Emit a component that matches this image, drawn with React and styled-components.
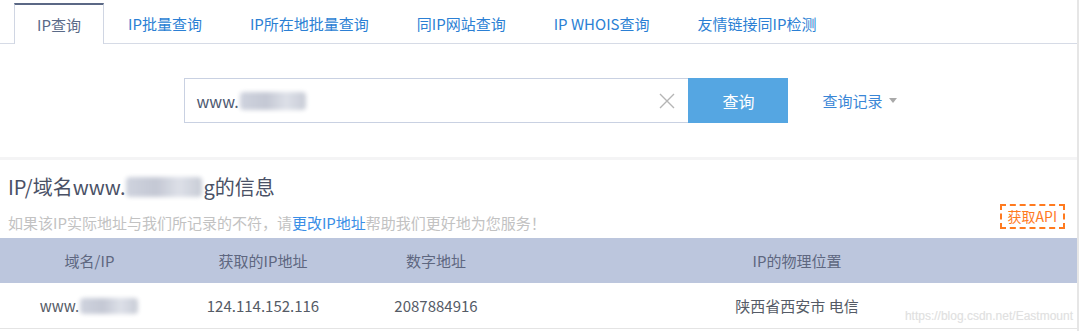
import React from 'react'
import styled, { createGlobalStyle } from 'styled-components'

const GlobalStyle = createGlobalStyle`
  body {
    margin: 0;
    background: #fff;
    font-family: "Noto Sans CJK SC", "Noto Sans", "Liberation Sans", sans-serif;
  }
`

const tabs = ['IP查询', 'IP批量查询', 'IP所在地批量查询', '同IP网站查询', 'IP WHOIS查询', '友情链接同IP检测']

const getColumns = () => [
  { title: '域名/IP', value: <>www.<Blur $w={58} $h={16} /></> },
  { title: '获取的IP地址', value: '124.114.152.116' },
  { title: '数字地址', value: '2087884916' },
  { title: 'IP的物理位置', value: '陕西省西安市 电信' },
]

export default function App() {
  const columns = getColumns()

  return (
    <>
      <GlobalStyle />
      <Page>
        <TabBar>
          {tabs.map((t, i) => (
            <Tab key={t} $active={i === 0}>{t}</Tab>
          ))}
        </TabBar>

        {/* search */}
        <SearchArea>
          <SearchBox>
            <InputText>www.<Blur $w={66} $h={18} /></InputText>
            <ClearIcon width="16" height="16" viewBox="0 0 16 16">
              <path d="M1 1 L15 15 M15 1 L1 15" stroke="#b5b5b5" strokeWidth="1.4" fill="none" />
            </ClearIcon>
          </SearchBox>
          <SearchButton>查询</SearchButton>
          <History>
            查询记录
            <Caret />
          </History>
        </SearchArea>

        <Divider />

        {/* info */}
        <Info>
          <Heading>
            IP/域名www.<Blur $w={76} $h={20} />g的信息
          </Heading>
          <NoteRow>
            <Note>
              如果该IP实际地址与我们所记录的不符，请<NoteLink>更改IP地址</NoteLink>帮助我们更好地为您服务！
            </Note>
            <ApiButton>获取API</ApiButton>
          </NoteRow>
        </Info>

        <Table>
          <HeadRow>
            {columns.map(c => <Cell key={c.title}>{c.title}</Cell>)}
          </HeadRow>
          <BodyRow>
            {columns.map(c => <Cell key={c.title}>{c.value}</Cell>)}
            <Watermark>https://blog.csdn.net/Eastmount</Watermark>
          </BodyRow>
        </Table>
      </Page>
    </>
  )
}

const Page = styled.div`
  width: 1077px;
  height: 331px;
  border-right: 2px solid #e6e6e6;
  overflow: hidden;
`

const TabBar = styled.div`
  display: flex;
  align-items: flex-end;
  height: 43px;
  padding-left: 14px;
  border-bottom: 1px solid #d6dbe6;
`

const Tab = styled.div`
  height: 40px;
  box-sizing: border-box;
  padding: 0 24px;
  display: flex;
  align-items: center;
  font-size: 15px;
  color: #2b7fd4;
  white-space: nowrap;

  ${props =>
    props.$active &&
    `
    width: 90px;
    justify-content: center;
    padding: 0;
    color: #5a6a88;
    background: #fff;
    border-top: 2px solid #5b6885;
    border-left: 1px solid #d0d6e3;
    border-right: 1px solid #d0d6e3;
    margin-bottom: -1px;
    height: 41px;
  `};
`

const SearchArea = styled.div`
  height: 113px;
  display: flex;
  align-items: center;
  justify-content: center;
  padding-left: 4px;
`

const SearchBox = styled.div`
  width: 504px;
  height: 45px;
  box-sizing: border-box;
  border: 1px solid #c9d1e2;
  border-right: none;
  display: flex;
  align-items: center;
  padding: 0 12px 0 11px;
`

const InputText = styled.div`
  flex: 1;
  font-size: 16px;
  color: #4d5870;
  display: flex;
  align-items: center;
`

const Blur = styled.span`
  display: inline-block;
  width: ${p => p.$w}px;
  height: ${p => p.$h}px;
  margin: 0 1px;
  background: linear-gradient(90deg, #cfd3de 0%, #c4c8d4 40%, #dde0e8 70%, #c8ccd6 100%);
  filter: blur(2px);
  border-radius: 4px;
  vertical-align: middle;
`

const ClearIcon = styled.svg`
  margin-right: 1px;
`

const SearchButton = styled.button`
  width: 100px;
  height: 45px;
  border: none;
  background: #55a6e2;
  color: #fff;
  font-size: 16px;
  font-family: inherit;
  padding: 0;
`

const History = styled.div`
  margin-left: 34px;
  font-size: 15px;
  color: #3a86d6;
  display: flex;
  align-items: center;
`

const Caret = styled.span`
  margin-left: 6px;
  width: 0;
  height: 0;
  border-left: 4px solid transparent;
  border-right: 4px solid transparent;
  border-top: 5px solid #a9a9a9;
`

const Divider = styled.div`
  height: 3px;
  background: #f4f4f5;
`

const Info = styled.div`
  padding: 12px 12px 0 8px;
  height: 66px;
`

const Heading = styled.div`
  font-size: 20px;
  color: #4a5166;
  line-height: 30px;
  display: flex;
  align-items: center;
`

const NoteRow = styled.div`
  display: flex;
  align-items: center;
  justify-content: space-between;
  margin-top: 4px;
`

const Note = styled.div`
  font-size: 15px;
  color: #c2c2c2;
  padding-top: 6px;
`

const NoteLink = styled.span`
  color: #3a8ee6;
`

const ApiButton = styled.div`
  border: 2px dashed #ff7a1f;
  color: #ff7a1f;
  font-size: 14px;
  padding: 0 6px;
  height: 21px;
  line-height: 21px;
  margin-top: -6px;
`

const Table = styled.div`
  font-size: 15px;
`

const HeadRow = styled.div`
  display: grid;
  grid-template-columns: 179px 168px 178px 544px;
  height: 45px;
  align-items: center;
  background: #bcc6dd;
  color: #5e6780;
`

const BodyRow = styled.div`
  position: relative;
  display: grid;
  grid-template-columns: 179px 168px 178px 544px;
  height: 45px;
  align-items: center;
  color: #555b66;
  border-bottom: 1px solid #e4e4e4;
`

const Cell = styled.div`
  text-align: center;
  display: flex;
  justify-content: center;
  align-items: center;
`

const Watermark = styled.div`
  position: absolute;
  right: 4px;
  bottom: 5px;
  font-family: "Liberation Sans", Arial, sans-serif;
  font-size: 12px;
  color: #e0e0e0;
  text-shadow: 0 0 1px #f4f4f4;
`
